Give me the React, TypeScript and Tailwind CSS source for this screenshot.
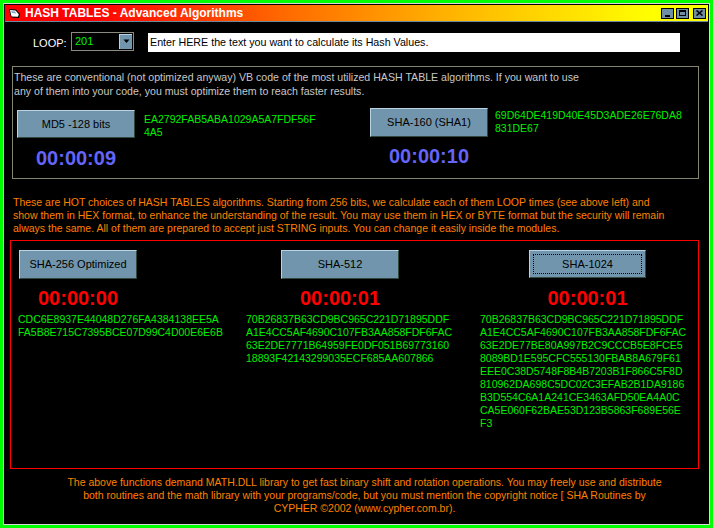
import React from "react";

const btn =
  "flex items-center justify-center bg-[#7195ac] text-black text-[11px] border-t border-l border-t-[#b8d4e4] border-l-[#b8d4e4] border-b border-r border-b-[#2f4a3c] border-r-[#2f4a3c]";

const timer = "text-center text-[20px] leading-[24px] font-bold";

function Hash({ lines, className }: { lines: string[]; className?: string }) {
  return (
    <div className={"text-[10.5px] leading-[13px] text-[#00f000] whitespace-nowrap " + (className ?? "")}>
      {lines.map((l, i) => (
        <div key={i}>{l}</div>
      ))}
    </div>
  );
}

function TitleIcon() {
  return (
    <svg width="13" height="11" viewBox="0 0 13 11">
      <path d="M1 1 L8 1.5 L12 6 L11 10 L3 9.5 Z" fill="#000" />
      <path d="M2 2 L7.5 2.5 L10.8 6.2 L10 8.8 L3.5 8.4 Z" fill="#fff" />
      <path d="M3 3 L7 3.4 L8.4 5.4 L4 5 Z" fill="#7fa8c8" />
    </svg>
  );
}

function CapBtn({ children }: { children: React.ReactNode }) {
  return (
    <div className="w-[13px] h-[11px] bg-[#6f8fa6] border border-black flex items-center justify-center">
      {children}
    </div>
  );
}

export default function App() {
  return (
    <div className="w-[713px] h-[528px] bg-[#00ff00] p-[1px] font-['Liberation_Sans',Arial,sans-serif] overflow-hidden">
      <div className="w-full h-full border-[2px] border-[#00ff00] bg-[#00ff00]">
        <div className="w-full h-full border border-[#d8d8d8]">
          <div className="w-full h-full border border-black bg-black flex flex-col">
            {/* Title bar */}
            <div className="h-[16px] shrink-0 flex items-center bg-[linear-gradient(to_right,#ff0000_12%,#ff6a00_40%,#ffb000_62%,#ffe000_80%,#ffff00_92%)] border-b border-[#6b8a9c] box-content">
              <div className="ml-[3px] mr-[4px] flex items-center">
                <TitleIcon />
              </div>
              <div className="text-white font-bold text-[12px] leading-[16px] whitespace-nowrap">
                HASH TABLES - Advanced Algorithms
              </div>
              <div className="ml-auto mr-[2px] flex items-center gap-[2px]">
                <CapBtn>
                  <div className="w-[5px] h-[2px] bg-black mt-[5px]" />
                </CapBtn>
                <CapBtn>
                  <div className="w-[7px] h-[6px] border border-black border-t-2" />
                </CapBtn>
                <div className="ml-[2px]">
                  <CapBtn>
                    <svg width="7" height="6" viewBox="0 0 7 6">
                      <path d="M0.5 0.5 L6.5 5.5 M6.5 0.5 L0.5 5.5" stroke="#000" strokeWidth="1.6" />
                    </svg>
                  </CapBtn>
                </div>
              </div>
            </div>

            {/* LOOP row */}
            <div className="mt-[10px] flex items-start h-[20px]">
              <div className="ml-[28px] w-[38px] text-[11px] text-white leading-[20px] mt-[1px]">LOOP:</div>
              <div className="w-[63px] h-[19px] border border-[#8a8a80] bg-black flex items-center pl-[3px] pr-[1px]">
                <span className="text-[#00f000] text-[11px]">201</span>
                <div className="ml-auto w-[13px] h-[15px] bg-[#7195ac] border-t border-l border-[#b8d4e4] flex flex-col items-center justify-center">
                  <svg width="7" height="6" viewBox="0 0 7 6">
                    <path d="M0.5 0.5 L6.5 0.5 L3.5 4 Z" fill="#000" />
                  </svg>
                </div>
              </div>
              <div className="ml-[14px] mt-[1px] w-[532px] h-[19px] bg-white text-black text-[10.7px] leading-[19px] pl-[2px] whitespace-nowrap">
                Enter HERE the text you want to calculate its Hash Values.
              </div>
            </div>

            {/* Conventional group */}
            <div className="mt-[14px] ml-[7px] w-[687px] h-[113px] border border-[#858572] flex flex-col shrink-0">
              <div className="pt-[4px] pl-[1px] text-[10.6px] leading-[13.5px] text-[#c8c8c8] whitespace-nowrap">
                <div>These are conventional (not optimized anyway) VB code of the most utilized HASH TABLE algorithms. If you want to use</div>
                <div>any of them into your code, you must optimize them to reach faster results.</div>
              </div>
              <div className="mt-[12px] ml-[4px] flex">
                <div className="w-[353px] flex">
                  <div className="w-[118px] flex flex-col">
                    <div className={btn + " h-[28px]"}>MD5 -128 bits</div>
                    <div className={timer + " mt-[8px] text-[#6464f8]"}>00:00:09</div>
                  </div>
                  <Hash className="ml-[9px] mt-[3px]" lines={["EA2792FAB5ABA1029A5A7FDF56F", "4A5"]} />
                </div>
                <div className="flex -mt-[2px]">
                  <div className="w-[118px] flex flex-col">
                    <div className={btn + " h-[29px]"}>SHA-160 (SHA1)</div>
                    <div className={timer + " mt-[7px] text-[#6464f8]"}>00:00:10</div>
                  </div>
                  <Hash className="ml-[7px] mt-[1px]" lines={["69D64DE419D40E45D3ADE26E76DA8", "831DE67"]} />
                </div>
              </div>
            </div>

            {/* Orange paragraph */}
            <div className="mt-[17px] ml-[8px] text-[10.5px] leading-[13px] text-[#ff8000] whitespace-nowrap">
              <div>These are HOT choices of HASH TABLES algorithms. Starting from 256 bits, we calculate each of them LOOP times (see above left) and</div>
              <div>show them in HEX format, to enhance the understanding of the result. You may use them in HEX or BYTE format but the security will remain</div>
              <div>always the same. All of them are prepared to accept just STRING inputs. You can change it easily inside the modules.</div>
            </div>

            {/* Red box */}
            <div className="mt-[5px] ml-[5px] w-[689px] h-[229px] border border-[#ff0000] shrink-0 flex flex-col">
              <div className="mt-[9px] flex items-start">
                <div className="ml-[8px] w-[118px] flex flex-col">
                  <div className={btn + " h-[29px]"}>SHA-256 Optimized</div>
                  <div className={timer + " mt-[7px] text-[#ff0000]"}>00:00:00</div>
                </div>
                <div className="ml-[144px] w-[118px] flex flex-col">
                  <div className={btn + " h-[29px]"}>SHA-512</div>
                  <div className={timer + " mt-[7px] text-[#ff0000]"}>00:00:01</div>
                </div>
                <div className="ml-[130px] w-[117px] flex flex-col">
                  <div className={btn + " h-[28px] p-[3px]"}>
                    <div className="w-full h-full border border-dotted border-black flex items-center justify-center">SHA-1024</div>
                  </div>
                  <div className={timer + " mt-[8px] text-[#ff0000]"}>00:00:01</div>
                </div>
              </div>
              <div className="mt-[3px] flex items-start">
                <Hash
                  className="ml-[7px] w-[228px]"
                  lines={["CDC6E8937E44048D276FA4384138EE5A", "FA5B8E715C7395BCE07D99C4D00E6E6B"]}
                />
                <Hash
                  className="w-[234px]"
                  lines={[
                    "70B26837B63CD9BC965C221D71895DDF",
                    "A1E4CC5AF4690C107FB3AA858FDF6FAC",
                    "63E2DE7771B64959FE0DF051B69773160",
                    "18893F42143299035ECF685AA607866",
                  ]}
                />
                <Hash
                  lines={[
                    "70B26837B63CD9BC965C221D71895DDF",
                    "A1E4CC5AF4690C107FB3AA858FDF6FAC",
                    "63E2DE77BE80A997B2C9CCCB5E8FCE5",
                    "8089BD1E595CFC555130FBAB8A679F61",
                    "EEE0C38D5748F8B4B7203B1F866C5F8D",
                    "810962DA698C5DC02C3EFAB2B1DA9186",
                    "B3D554C6A1A241CE3463AFD50EA4A0C",
                    "CA5E060F62BAE53D123B5863F689E56E",
                    "F3",
                  ]}
                />
              </div>
            </div>

            {/* Footer */}
            <div className="mt-[7px] pl-[16px] text-center text-[10.5px] leading-[13px] text-[#ff8000] whitespace-nowrap">
              <div>The above functions demand MATH.DLL library to get fast binary shift and rotation operations. You may freely use and distribute</div>
              <div>both routines and the math library with your programs/code, but you must mention the copyright notice [ SHA Routines by</div>
              <div>CYPHER ©2002 (www.cypher.com.br).</div>
            </div>
          </div>
        </div>
      </div>
    </div>
  );
}
